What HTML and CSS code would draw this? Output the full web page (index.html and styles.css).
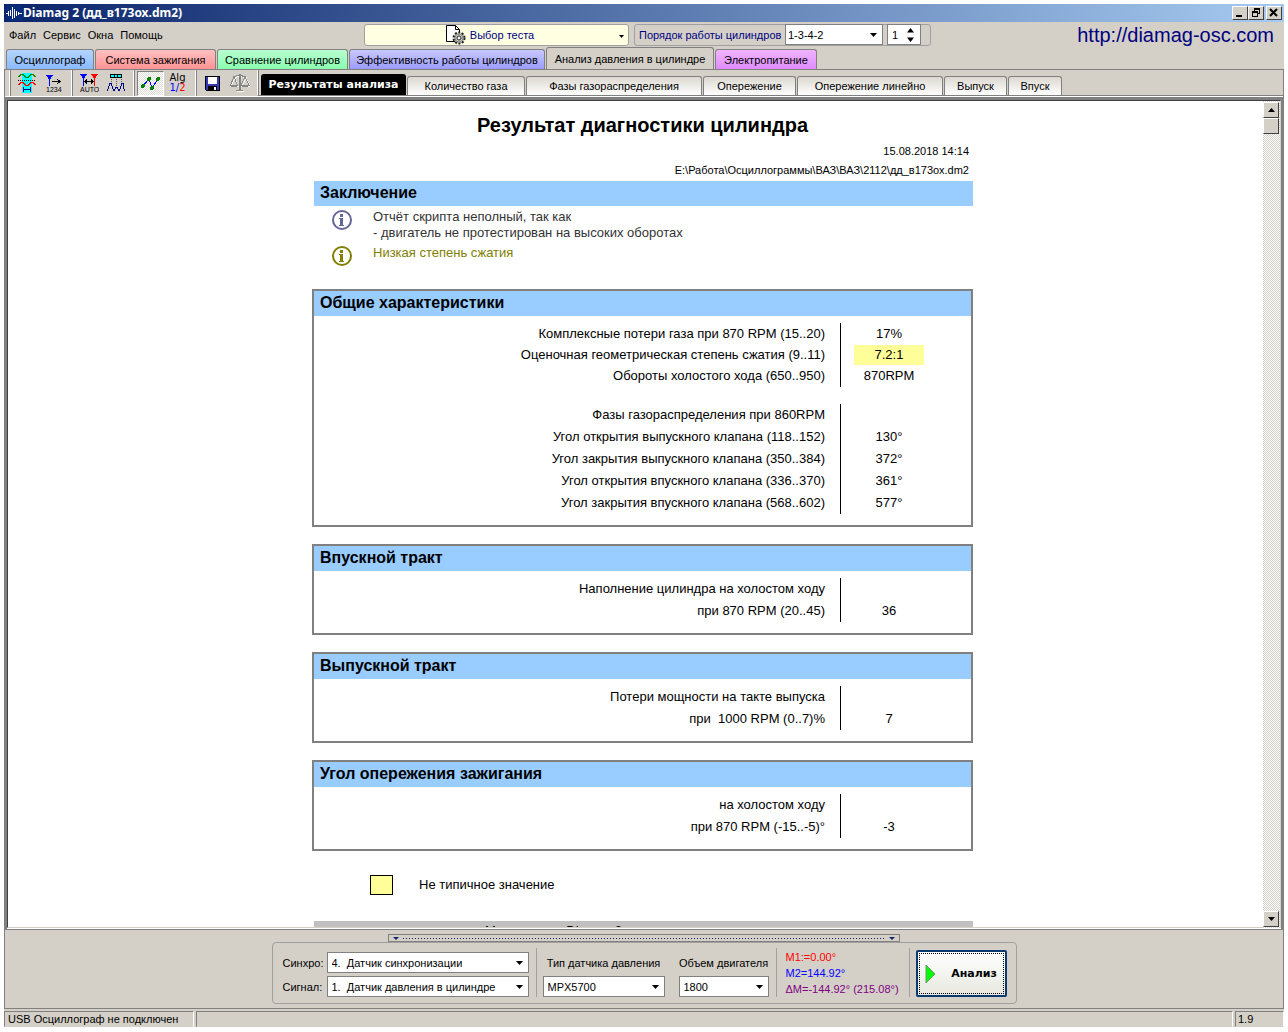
FILE: index.html
```html
<!DOCTYPE html>
<html lang="ru">
<head>
<meta charset="utf-8">
<title>Diamag 2</title>
<link rel="stylesheet" href="styles.css">
</head>
<body>
<div class="window">
  <header class="titlebar">
    <svg class="app-icon" width="16" height="16" viewBox="0 0 16 16" aria-hidden="true"><rect width="16" height="16" fill="#0a2a7c"/><path d="M0 8.500h2.500V6v5M4.500 5v6M6.500 2v12M8.500 4v9M10.500 6v5M12.500 7v3M13 8.500h3" fill="none" stroke="#fff"/></svg>
    <h1 class="titlebar-text">Diamag 2 (дд_в173ох.dm2)</h1>
    <div class="caption-buttons">
      <button class="caption-btn" aria-label="Свернуть"><svg width="12" height="10" viewBox="0 0 12 10"><path d="M2 7h6v2H2z"/></svg></button>
      <button class="caption-btn" aria-label="Восстановить"><svg width="12" height="10" viewBox="0 0 12 10"><path d="M4 0h6v6H8V5h1V2H5v1H4zM2 3h6v6H2zM3 5v3h4V5z" fill-rule="evenodd"/></svg></button>
      <button class="caption-btn caption-close" aria-label="Закрыть"><svg width="12" height="10" viewBox="0 0 12 10"><path d="M2 1l7 7M9 1L2 8" stroke="#000" stroke-width="2"/></svg></button>
    </div>
  </header>

  <div class="menubar">
    <nav class="menu">
      <button class="menu-item">Файл</button>
      <button class="menu-item">Сервис</button>
      <button class="menu-item">Окна</button>
      <button class="menu-item">Помощь</button>
    </nav>
    <button class="test-picker">
      <svg width="21" height="21" viewBox="0 0 21 21" aria-hidden="true"><path d="M1.500 1.500h9l4 4v12h-13z" fill="#fff" stroke="#000"/><path d="M10.500 1.500v4h4" fill="none" stroke="#000"/><circle cx="14" cy="14" r="5.500" fill="#c8c8c0" stroke="#222" stroke-width="2" stroke-dasharray="2 1.500"/><circle cx="14" cy="14" r="4" fill="#c8c8c0" stroke="#888"/><circle cx="14" cy="14" r="2" fill="#fff" stroke="#222"/></svg>
      <span>Выбор теста</span>
      <svg class="picker-arrow" width="5" height="3" viewBox="0 0 5 3" aria-hidden="true"><path d="M0 0h5L2.500 3z"/></svg>
    </button>
    <div class="order-group">
      <label for="order">Порядок работы цилиндров</label>
      <select id="order" class="combo combo-order"><option>1-3-4-2</option></select>
      <div class="spinner">
        <input id="cylinder" class="spinner-value" type="text" value="1" aria-label="Номер цилиндра">
        <svg width="7" height="14" viewBox="0 0 7 14" aria-hidden="true"><path d="M0 4.500h7L3.500 0zM0 9.500h7L3.500 14z"/></svg>
      </div>
    </div>
    <a class="site-link" href="http://diamag-osc.com">http://diamag-osc.com</a>
  </div>

  <div class="tabs" role="tablist">
    <button class="tab tab-blue" role="tab">Осциллограф</button>
    <button class="tab tab-red" role="tab">Система зажигания</button>
    <button class="tab tab-green" role="tab">Сравнение цилиндров</button>
    <button class="tab tab-violet" role="tab">Эффективность работы цилиндров</button>
    <button class="tab tab-active" role="tab" aria-selected="true">Анализ давления в цилиндре</button>
    <button class="tab tab-pink" role="tab">Электропитание</button>
  </div>

  <div class="frame">
    <div class="toolbar">
      <div class="tool-group">
        <button class="tool" aria-label="Сдвиг"><svg width="18" height="20" viewBox="0 0 18 20"><path d="M4 0h10v20H4z" fill="#0ff"/><path d="M0 3.500h1l2-2h2l2 2 1 1h2l1-1 2-2h2l2 2h1" fill="none" stroke="#080"/><path d="M0 7.500h18" stroke="#000" stroke-dasharray="1 1"/><path d="M0 11.500h1l2-2h2l2 2 1 1h2l1-1 2-2h2l2 2h1" fill="none" stroke="#f00"/><path d="M5.500 14v5M12.500 14v5M6 16.500h7" stroke="#008"/></svg></button>
        <button class="tool" aria-label="Нумерация"><svg width="18" height="20" viewBox="0 0 18 20"><path d="M1 2h7L5.500 6H3.500z" fill="#00f"/><path d="M4.500 5v8" stroke="#00f"/><path d="M7 8.500h8M12 6l3 2.500-3 2.500" fill="none" stroke="#000"/><text x="1" y="19" font-size="7">1234</text></svg></button>
      </div>
      <div class="tool-group">
        <button class="tool" aria-label="Автомаркер"><svg width="20" height="20" viewBox="0 0 20 20"><path d="M1 1h7L5.500 5H3.500z" fill="#00f"/><path d="M4.500 5v8" stroke="#00f"/><path d="M12 1h7l-2.500 4h-2z" fill="#f00"/><path d="M15.500 5v8" stroke="#f00"/><path d="M6 8.500h8M8 6.500l-2 2 2 2M12 6.500l2 2-2 2" fill="none" stroke="#000"/><text x="1" y="19" font-size="7">AUTO</text></svg></button>
        <button class="tool" aria-label="Пики"><svg width="20" height="20" viewBox="0 0 20 20"><rect x="4.500" y="1.500" width="11" height="3" fill="#0ff" stroke="#000"/><path d="M8.500 2v2M11.500 2v2" stroke="#000"/><path d="M5.500 6v5M10.500 6v8M15.500 6v5" stroke="#555" stroke-dasharray="1 1"/><path d="M1 18l1-2 2-6h1l2 6 1 2 2-4h1l2 4 1-2 2-6h1l1 6 1 2" fill="none" stroke="#008"/></svg></button>
      </div>
      <div class="tool-group">
        <button class="tool tool-pressed" aria-label="Точки" aria-pressed="true"><svg width="21" height="16" viewBox="0 0 21 16"><path d="M3 11l6-7 3 9 6-9" fill="none" stroke="#00f"/><g fill="#008000"><circle cx="3" cy="11" r="2"/><circle cx="9" cy="4" r="2"/><circle cx="12" cy="13" r="2"/><circle cx="18" cy="4" r="2"/></g></svg></button>
        <button class="tool tool-alg" aria-label="Алгоритм"><span>Alg</span><span class="alg-num">1/<b>2</b></span></button>
      </div>
      <div class="tool-group">
        <button class="tool" aria-label="Сохранить"><svg width="15" height="15" viewBox="0 0 15 15"><path d="M1 0h14v15H1L0 14V0z" fill="#000"/><path d="M1 1h13v13H1z" fill="#3a3ab0"/><path d="M3 1h9v7H3z" fill="#fff"/><path d="M3 10h9v4H3z" fill="#000"/><path d="M9 11h2v3H9z" fill="#fff"/></svg></button>
        <button class="tool" aria-label="Сравнить" disabled><svg width="20" height="20" viewBox="0 0 20 20"><g fill="none" stroke="#fff" transform="translate(1 1)"><path d="M3 4l6-2 7 2M9.500 1v16M6 17.500h7M4 4l-4 8h7zM15 4l-4 8h8z"/></g><g fill="none" stroke="#868686"><path d="M3 4l6-2 7 2M6 17.500h7M4 4L0.500 12h7zM15 4l-4 8h8z"/><path d="M9.500 1v16" stroke-width="2"/></g><path d="M0 12h8c-1 3-7 3-8 0zM11 12h8c-1 3-7 3-8 0z" fill="#868686"/></svg></button>
      </div>
      <div class="subtabs" role="tablist">
        <button class="subtab subtab-active" role="tab" aria-selected="true">Результаты анализа</button>
        <button class="subtab subtab-md" role="tab">Количество газа</button>
        <button class="subtab subtab-xl" role="tab">Фазы газораспределения</button>
        <button class="subtab subtab-sm" role="tab">Опережение</button>
        <button class="subtab subtab-lg" role="tab">Опережение линейно</button>
        <button class="subtab subtab-xs" role="tab">Выпуск</button>
        <button class="subtab subtab-xxs" role="tab">Впуск</button>
      </div>
    </div>

    <div class="pane">
      <main class="report-view">
        <article class="report">
          <h2 class="report-title">Результат диагностики цилиндра</h2>
          <p class="report-meta">15.08.2018 14:14</p>
          <p class="report-meta">E:\Работа\Осциллограммы\ВАЗ\ВАЗ\2112\дд_в173ох.dm2</p>

          <section class="summary">
            <h3 class="section-head">Заключение</h3>
            <div class="note">
              <svg width="20" height="20" viewBox="0 0 20 20" aria-hidden="true"><circle cx="10" cy="10" r="9" fill="none" stroke="#669" stroke-width="2"/><path d="M8 4h3v3H8zM7 8h4v7h1v1H7v-1h1V9H7z" fill="#669"/></svg>
              <p>Отчёт скрипта неполный, так как<br>- двигатель не протестирован на высоких оборотах</p>
            </div>
            <div class="note note-warn">
              <svg width="20" height="20" viewBox="0 0 20 20" aria-hidden="true"><circle cx="10" cy="10" r="9" fill="none" stroke="#808000" stroke-width="2"/><path d="M8 4h3v3H8zM7 8h4v7h1v1H7v-1h1V9H7z" fill="#808000"/></svg>
              <p>Низкая степень сжатия</p>
            </div>
          </section>

          <section class="box">
            <h3 class="section-head">Общие характеристики</h3>
            <table class="params">
              <tbody>
                <tr><th>Комплексные потери газа при 870 RPM (15..20)</th><td>17%</td></tr>
                <tr class="row-mark"><th>Оценочная геометрическая степень сжатия (9..11)</th><td><mark>7.2:1</mark></td></tr>
                <tr><th>Обороты холостого хода (650..950)</th><td>870RPM</td></tr>
              </tbody>
            </table>
            <table class="params params-next">
              <tbody>
                <tr><th>Фазы газораспределения при 860RPM</th><td></td></tr>
                <tr><th>Угол открытия выпускного клапана (118..152)</th><td>130°</td></tr>
                <tr><th>Угол закрытия выпускного клапана (350..384)</th><td>372°</td></tr>
                <tr><th>Угол открытия впускного клапана (336..370)</th><td>361°</td></tr>
                <tr><th>Угол закрытия впускного клапана (568..602)</th><td>577°</td></tr>
              </tbody>
            </table>
          </section>

          <section class="box">
            <h3 class="section-head">Впускной тракт</h3>
            <table class="params">
              <tbody>
                <tr><th>Наполнение цилиндра на холостом ходу</th><td></td></tr>
                <tr><th>при 870 RPM (20..45)</th><td>36</td></tr>
              </tbody>
            </table>
          </section>

          <section class="box">
            <h3 class="section-head">Выпускной тракт</h3>
            <table class="params">
              <tbody>
                <tr><th>Потери мощности на такте выпуска</th><td></td></tr>
                <tr><th>при &nbsp;1000 RPM (0..7)%</th><td>7</td></tr>
              </tbody>
            </table>
          </section>

          <section class="box">
            <h3 class="section-head">Угол опережения зажигания</h3>
            <table class="params">
              <tbody>
                <tr><th>на холостом ходу</th><td></td></tr>
                <tr><th>при 870 RPM (-15..-5)°</th><td>-3</td></tr>
              </tbody>
            </table>
          </section>

          <p class="legend"><span class="swatch"></span>Не типичное значение</p>
          <footer class="report-foot">Мотортестер Diamag 2</footer>
        </article>
      </main>
      <div class="scrollbar">
        <button class="scroll-btn" aria-label="Вверх"><svg width="7" height="4" viewBox="0 0 7 4"><path d="M0 4h7L3.500 0z"/></svg></button>
        <div class="scroll-thumb"></div>
        <button class="scroll-btn scroll-down" aria-label="Вниз"><svg width="7" height="4" viewBox="0 0 7 4"><path d="M0 0h7L3.500 4z"/></svg></button>
      </div>
    </div>

    <div class="lower">
      <div class="splitter">
        <svg width="6" height="3" viewBox="0 0 6 3" aria-hidden="true"><path d="M0 0h6L3 3z" fill="#0a246a"/></svg>
        <span class="splitter-dots"></span>
        <svg width="6" height="3" viewBox="0 0 6 3" aria-hidden="true"><path d="M0 0h6L3 3z" fill="#0a246a"/></svg>
      </div>
      <form class="controls">
        <div class="channels">
          <label for="sync">Синхро:</label>
          <select id="sync" class="combo"><option>4. &nbsp;Датчик синхронизации</option></select>
          <label for="signal">Сигнал:</label>
          <select id="signal" class="combo"><option>1. &nbsp;Датчик давления в цилиндре</option></select>
        </div>
        <div class="engine">
          <div class="field field-sensor">
            <label for="sensor">Тип датчика давления</label>
            <select id="sensor" class="combo"><option>MPX5700</option></select>
          </div>
          <div class="field field-volume">
            <label for="volume">Объем двигателя</label>
            <select id="volume" class="combo"><option>1800</option></select>
          </div>
        </div>
        <div class="markers">
          <span class="m1">M1:=0.00°</span>
          <span class="m2">M2=144.92°</span>
          <span class="dm">ΔM=-144.92° (215.08°)</span>
        </div>
        <button class="analyze" type="button">
          <svg width="11" height="20" viewBox="0 0 11 20" aria-hidden="true"><path d="M1 1v18l9-9z" fill="#0f0" stroke="#6a9a6a"/></svg>
          <span>Анализ</span>
        </button>
      </form>
    </div>
  </div>

  <footer class="statusbar">
    <span class="status status-device">USB Осциллограф не подключен</span>
    <span class="status status-fill"></span>
    <span class="status status-version">1.9</span>
  </footer>
</div>
</body>
</html>
```
FILE: styles.css
```css
* { box-sizing: border-box; }

body {
  margin: 0;
  padding: 4px 4px 5px;
  background: #fff;
  color: #000;
  font-family: "Liberation Sans", Arial, sans-serif;
  font-size: 11px;
  line-height: 14px;
}

h1, h2, h3, p { margin: 0; }

button, select, input {
  margin: 0;
  padding: 0;
  border: 0;
  background: none;
  color: inherit;
  font: inherit;
}

.window {
  display: flex;
  flex-direction: column;
  height: calc(100vh - 9px);
  min-height: 500px;
  background: #d4d0c8;
}

/* Title bar */
.titlebar {
  display: flex;
  align-items: center;
  flex: none;
  height: 18px;
  padding: 0 2px;
  gap: 1px;
  background: linear-gradient(90deg, #0a246a, #a6caf0);
}
.titlebar-text {
  flex: 1;
  color: #fff;
  font: bold 12px/16px "Noto Sans", sans-serif;
}
.caption-buttons { display: flex; }
.caption-btn {
  display: flex;
  align-items: center;
  justify-content: center;
  width: 16px;
  height: 14px;
  background: #d4d0c8;
  border: 1px solid;
  border-color: #fff #404040 #404040 #fff;
}
.caption-close { margin-left: 2px; }

/* Menu row */
.menubar {
  display: flex;
  align-items: center;
  flex: none;
  height: 25px;
}
.menu {
  display: flex;
  width: 360px;
  padding-left: 5px;
  gap: 7px;
}
.test-picker {
  display: flex;
  align-items: center;
  justify-content: center;
  position: relative;
  width: 265px;
  height: 22px;
  gap: 4px;
  margin-right: 5px;
  padding-right: 14px;
  background: #ffffe1;
  border: 1px solid #a0a0a0;
  border-radius: 3px;
  color: #000080;
}
.picker-arrow { position: absolute; right: 4px; top: 10px; fill: #000; }
.order-group {
  display: flex;
  align-items: center;
  height: 22px;
  gap: 4px;
  padding: 0 9px 0 4px;
  border: 1px solid #a0a0a0;
  border-radius: 3px;
  color: #000080;
}
.order-group label { width: 142px; white-space: nowrap; }
.combo {
  width: 100%;
  height: 21px;
  padding: 0 20px 0 4px;
  appearance: none;
  color: #000;
  background: #fff url("data:image/svg+xml,%3Csvg xmlns='http://www.w3.org/2000/svg' width='7' height='4'%3E%3Cpath d='M0 0h7L3.500 4z'/%3E%3C/svg%3E") no-repeat right 5px center;
  border: 1px solid #808080;
}
.combo-order { width: 98px; padding-left: 2px; }
.spinner {
  display: flex;
  align-items: center;
  width: 34px;
  height: 21px;
  padding: 0 6px 0 4px;
  background: #fff;
  border: 1px solid #808080;
}
.spinner-value { flex: 1; width: 0; color: #000; }
.site-link {
  margin-left: auto;
  padding-right: 10px;
  color: #000080;
  font-size: 20px;
  line-height: 24px;
  text-decoration: none;
}

/* Main tabs */
.tabs {
  display: flex;
  align-items: flex-end;
  flex: none;
  height: 22px;
  padding-left: 2px;
  gap: 1px;
}
.tab {
  height: 20px;
  border: 1px solid #808080;
  border-bottom: 0;
  border-radius: 3px 3px 0 0;
  white-space: nowrap;
}
.tab-blue { width: 88px; background: linear-gradient(#b4d4ff, #8abaff); }
.tab-red { width: 121px; background: linear-gradient(#ffc0c0, #ff9494); }
.tab-green { width: 131px; background: linear-gradient(#b8ffd0, #8affb0); }
.tab-violet { width: 196px; background: linear-gradient(#c8c8ff, #9c9cff); }
.tab-active { width: 168px; height: 22px; }
.tab-pink { width: 102px; background: linear-gradient(#f0b4ff, #e08cff); }

.frame {
  display: flex;
  flex-direction: column;
  flex: 1;
  min-height: 0;
  border: 1px solid #808080;
}

/* Toolbar */
.toolbar {
  display: flex;
  flex: none;
  height: 27px;
  padding-left: 4px;
  border-bottom: 1px solid #fff;
}
.tool-group {
  display: flex;
  align-items: center;
  width: 62px;
  height: 26px;
  padding-left: 3px;
  border-left: 1px solid #fff;
  box-shadow: inset 1px 0 #808080;
}
.tool {
  display: flex;
  align-items: center;
  justify-content: center;
  width: 27px;
  height: 25px;
}
.tool svg { shape-rendering: crispEdges; }
.tool-pressed {
  border: 1px solid;
  border-color: #808080 #fff #fff #808080;
  background: repeating-conic-gradient(#fff 0 25%, #dedad4 0 50%) 0 0 / 2px 2px;
}
.tool-alg {
  flex-direction: column;
  font: 10px/10px "DejaVu Sans", sans-serif;
}
.alg-num { color: #00f; }
.alg-num b { color: #f00; font-weight: normal; }

.subtabs {
  display: flex;
  align-items: flex-end;
  flex: 1;
  gap: 1px;
  padding-left: 3px;
  border-left: 1px solid #fff;
  border-bottom: 1px solid #808080;
  box-shadow: inset 1px 0 #808080;
}
.subtab {
  height: 19px;
  background: linear-gradient(#dcd8d0, #fff);
  border: 1px solid #808080;
  border-bottom: 0;
  border-radius: 3px 3px 0 0;
  white-space: nowrap;
}
.subtab-active {
  width: 145px;
  height: 21px;
  background: #000;
  border-color: #000;
  color: #fff;
  font: bold 11px/14px "DejaVu Sans", sans-serif;
}
.subtab-xl { width: 176px; }
.subtab-lg { width: 146px; }
.subtab-md { width: 118px; }
.subtab-sm { width: 93px; }
.subtab-xs { width: 63px; }
.subtab-xxs { width: 54px; }

/* Report pane */
.pane {
  display: flex;
  flex: 1;
  min-height: 0;
  padding-bottom: 1px;
  border: solid #808080;
  border-width: 3px 2px 0 2px;
  background: #fff;
}
.report-view {
  flex: 1;
  min-width: 0;
  overflow: hidden;
  padding-left: 14px;
  border-top: 1px solid #404040;
  border-left: 1px solid #404040;
  border-bottom: 1px solid #d4d0c8;
}
.report {
  max-width: 661px;
  margin: 0 auto;
  padding-top: 12px;
}
.report-title {
  margin-bottom: 5px;
  font-size: 20px;
  line-height: 24px;
  text-align: center;
}
.report-meta {
  padding-right: 4px;
  line-height: 19px;
  text-align: right;
}
.section-head {
  height: 25px;
  padding-left: 6px;
  background: #9cf;
  font-size: 16px;
  line-height: 23px;
}
.summary {
  min-height: 108px;
  margin-top: 1px;
  padding-left: 2px;
  color: #333;
}
.summary .section-head { color: #000; }
.note {
  display: flex;
  gap: 21px;
  padding: 4px 0 0 18px;
  font-size: 13px;
  line-height: 16px;
}
.note p { margin-top: -1px; }
.note-warn { padding-top: 5px; color: #808000; }
.box {
  padding-bottom: 11px;
  margin-bottom: 17px;
  border: 2px solid #808080;
}
.params {
  width: 100%;
  margin-top: 7px;
  border-spacing: 0;
  font-size: 13px;
  line-height: 20px;
}
.params-next { margin-top: 17px; }
.params tr { height: 22px; }
.params .row-mark { height: 20px; }
.params th {
  padding: 0 15px 0 0;
  border-right: 1px solid #000;
  font-weight: normal;
  text-align: right;
}
.params td {
  width: 130px;
  padding: 0 34px 0 0;
  text-align: center;
}
.params mark {
  display: block;
  width: 70px;
  margin: 0 auto;
  background: #ff9;
}
.legend {
  display: flex;
  align-items: center;
  gap: 26px;
  height: 20px;
  margin: 24px 0 26px;
  padding-left: 58px;
  font-size: 13px;
}
.swatch {
  width: 23px;
  height: 20px;
  background: #ff9;
  border: 1px solid #000;
}
.report-foot {
  height: 25px;
  margin-left: 2px;
  padding-left: 171px;
  background: #c0c0c0;
  font-size: 13px;
  line-height: 20px;
}

.scrollbar {
  display: flex;
  flex-direction: column;
  width: 18px;
  padding: 1px 1px 1px 0;
  border-top: 1px solid #404040;
  background: repeating-conic-gradient(#fff 0 25%, #d4d0c8 0 50%) 0 0 / 2px 2px;
  border-right: 1px solid #d4d0c8;
}
.scroll-btn, .scroll-thumb {
  display: flex;
  align-items: center;
  justify-content: center;
  height: 16px;
  background: #d4d0c8;
  border: 1px solid;
  border-color: #fff #404040 #404040 #fff;
}
.scroll-down { margin-top: auto; }

/* Lower control panel */
.lower {
  flex: none;
  padding: 4px 0 4px;
  border-top: 1px solid #808080;
}
.splitter {
  display: flex;
  align-items: center;
  width: 40%;
  height: 8px;
  margin: 0 auto;
  padding: 0 4px;
  gap: 4px;
  border: 1px solid #808080;
}
.splitter-dots {
  flex: 1;
  height: 1px;
  background: repeating-linear-gradient(90deg, #0a246a 0 1px, transparent 1px 3px);
}
.controls {
  display: flex;
  width: 745px;
  max-width: 100%;
  height: 62px;
  margin: 0 auto;
  padding: 5px 9px 6px 10px;
  border: 1px solid #a0a0a0;
  border-radius: 4px;
}
.channels {
  display: grid;
  grid-template-columns: 40px 202px;
  gap: 3px 4px;
  align-items: center;
  align-content: end;
  padding-right: 7px;
  border-right: 1px solid #a0a0a0;
  white-space: nowrap;
}
.engine {
  display: flex;
  gap: 14px;
  padding: 0 7px 0 6px;
  border-right: 1px solid #a0a0a0;
}
.field {
  display: flex;
  flex-direction: column;
  justify-content: flex-end;
  gap: 6px;
  text-align: center;
  white-space: nowrap;
}
.field-sensor { width: 122px; }
.field-volume { width: 90px; }
.markers {
  display: flex;
  flex-direction: column;
  justify-content: center;
  width: 133px;
  padding-left: 9px;
  border-right: 1px solid #a0a0a0;
  line-height: 16px;
  white-space: nowrap;
}
.m1 { color: #f00; }
.m2 { color: #00f; }
.dm { color: #800080; }
.analyze {
  display: flex;
  align-items: center;
  justify-content: center;
  flex: 1;
  gap: 15px;
  margin: 2px 0 0 6px;
  border: 2px solid #0a3a70;
  border-radius: 2px;
  outline: 1px dotted #000;
  outline-offset: -4px;
  background: linear-gradient(#fff, #e8e8e0);
  font: bold 11px/14px "DejaVu Sans", sans-serif;
}

/* Status bar */
.statusbar {
  display: flex;
  flex: none;
  height: 18px;
  padding-top: 2px;
  gap: 2px;
}
.status {
  padding-left: 3px;
  border: 1px solid;
  border-color: #808080 #fff #d4d0c8 #808080;
  white-space: nowrap;
}
.status-device { width: 190px; }
.status-fill { flex: 1; }
.status-version { width: 49px; padding-left: 2px; }
```
